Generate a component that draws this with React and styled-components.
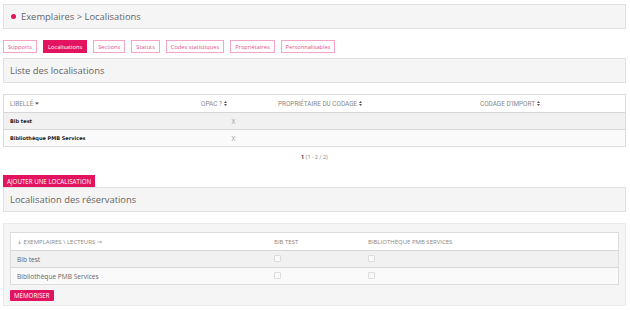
import React from "react";
import styled, { createGlobalStyle } from "styled-components";

const PINK = "#e2135f";

const Global = createGlobalStyle`
  html, body { margin: 0; padding: 0; background: #fff; }
  body { font-family: "Open Sans", "Liberation Sans", sans-serif; color: #555; }
  * { box-sizing: border-box; }
`;

const Page = styled.div`
  padding: 4px 4px 0 3px;
  display: flex;
  flex-direction: column;
`;

const TitleBar = styled.div`
  height: 25px;
  background: #f5f5f5;
  border: 1px solid #e0e0e0;
  display: flex;
  align-items: center;
  padding-left: ${(p) => (p.$dot ? "7px" : "6px")};
  font-size: 9.4px;
  color: #666;
  margin-top: ${(p) => p.$mt || 0}px;
`;

const Dot = styled.span`
  width: 5px;
  height: 5px;
  border-radius: 50%;
  background: ${PINK};
  margin-right: 5px;
`;

const Tabs = styled.div`
  display: flex;
  gap: 6px;
  margin-top: 11px;
`;

const Tab = styled.div`
  height: 13px;
  padding: 0 4px;
  display: flex;
  align-items: center;
  font-size: 5.7px;
  border: 1px solid ${(p) => (p.$active ? PINK : "#f2a6c3")};
  background: ${(p) => (p.$active ? PINK : "#fff")};
  color: ${(p) => (p.$active ? "#fff" : "#e2508a")};
`;

const Table = styled.div`
  margin-top: ${(p) => p.$mt || 0}px;
  border: 1px solid #dcdcdc;
  background: #fff;
`;

const Row = styled.div`
  display: grid;
  grid-template-columns: ${(p) => p.$cols};
  height: 17px;
  align-items: center;
  background: ${(p) => (p.$bg ? p.$bg : "#fff")};
  border-top: ${(p) => (p.$first ? "none" : "1px solid #d6d6d6")};
`;

const Head = styled.div`
  font-family: ${(p) => (p.$roboto ? "Roboto, 'Liberation Sans', sans-serif" : "'Open Sans', sans-serif")};
  font-size: ${(p) => (p.$roboto ? "6.4px" : "6px")};
  text-transform: uppercase;
  color: #888;
  padding-left: 6px;
  display: flex;
  align-items: center;
  gap: 2px;
  white-space: nowrap;
`;

const Cell = styled.div`
  padding-left: ${(p) => (p.$center ? 0 : 6)}px;
  text-align: ${(p) => (p.$center ? "center" : "left")};
  font-family: ${(p) => (p.$bold ? "'DejaVu Sans', Verdana, sans-serif" : "'Open Sans', sans-serif")};
  font-weight: ${(p) => (p.$bold ? 700 : 400)};
  font-size: ${(p) => (p.$bold ? "5px" : "6.6px")};
  color: ${(p) => (p.$bold ? "#222" : p.$muted ? "#999" : "#666")};
  white-space: nowrap;
`;

const Pager = styled.div`
  margin-top: 7px;
  text-align: center;
  font-size: 5.5px;
  color: #888;
  font-family: Roboto, sans-serif;
  b { color: #333; }
`;

const Button = styled.div`
  align-self: flex-start;
  height: 12px;
  padding: 0 4px;
  display: flex;
  align-items: center;
  background: ${PINK};
  color: #fff;
  font-size: 6.2px;
  text-transform: uppercase;
  margin-top: ${(p) => p.$mt || 0}px;
  border-radius: ${(p) => (p.$round ? "1px" : "0")};
`;

const Panel = styled.div`
  margin-top: 11px;
  background: #f5f5f5;
  border: 1px solid #ebebeb;
  padding: 8px 6px 4px 6px;
  height: 83px;
  display: flex;
  flex-direction: column;
`;

const Check = styled.span`
  display: inline-block;
  width: 7px;
  height: 7px;
  border: 1px solid #dcdcdc;
  background: #fafafa;
  border-radius: 1px;
`;

const SortBoth = () => (
  <svg width="3" height="5" viewBox="0 0 3 5">
    <path d="M1.5 0 L3 2 L0 2 Z M1.5 5 L3 3 L0 3 Z" fill="#555" />
  </svg>
);

const SortDown = () => (
  <svg width="4" height="3" viewBox="0 0 4 3">
    <path d="M0 0.5 L4 0.5 L2 2.8 Z" fill="#555" />
  </svg>
);

const cols1 = "191px 77px 202px 1fr";
const cols2 = "257px 94px 1fr";

export default function App() {
  return (
    <>
      <Global />
      <Page>
        <TitleBar $dot>
          <Dot />
          Exemplaires &gt; Localisations
        </TitleBar>
        <Tabs>
          <Tab>Supports</Tab>
          <Tab $active>Localisations</Tab>
          <Tab>Sections</Tab>
          <Tab>Statuts</Tab>
          <Tab>Codes statistiques</Tab>
          <Tab>Propriétaires</Tab>
          <Tab>Personnalisables</Tab>
        </Tabs>
        <TitleBar $mt={5}>Liste des localisations</TitleBar>
        <Table $mt={11}>
          <Row $cols={cols1} $first>
            <Head $roboto>Libellé <SortDown /></Head>
            <Head $roboto>Opac ? <SortBoth /></Head>
            <Head $roboto>Propriétaire du codage <SortBoth /></Head>
            <Head $roboto>Codage d'import <SortBoth /></Head>
          </Row>
          <Row $cols={cols1} $bg="#f1f1f1">
            <Cell $bold>Bib test</Cell>
            <Cell $center $muted>X</Cell>
            <Cell />
            <Cell />
          </Row>
          <Row $cols={cols1} $bg="#fafafa">
            <Cell $bold>Bibliothèque PMB Services</Cell>
            <Cell $center $muted>X</Cell>
            <Cell />
            <Cell />
          </Row>
        </Table>
        <Pager>
          <b>1</b> (1 - 2 / 2)
        </Pager>
        <Button $mt={15}>Ajouter une localisation</Button>
        <TitleBar>Localisation des réservations</TitleBar>
        <Panel>
          <Table>
            <Row $cols={cols2} $first>
              <Head>⇣ Exemplaires \ Lecteurs ⇒</Head>
              <Head>Bib test</Head>
              <Head>Bibliothèque PMB Services</Head>
            </Row>
            <Row $cols={cols2} $bg="#f1f1f1">
              <Cell>Bib test</Cell>
              <Cell><Check /></Cell>
              <Cell><Check /></Cell>
            </Row>
            <Row $cols={cols2} $bg="#fafafa">
              <Cell>Bibliothèque PMB Services</Cell>
              <Cell><Check /></Cell>
              <Cell><Check /></Cell>
            </Row>
          </Table>
          <Button $mt={5} $round>Mémoriser</Button>
        </Panel>
      </Page>
    </>
  );
}
